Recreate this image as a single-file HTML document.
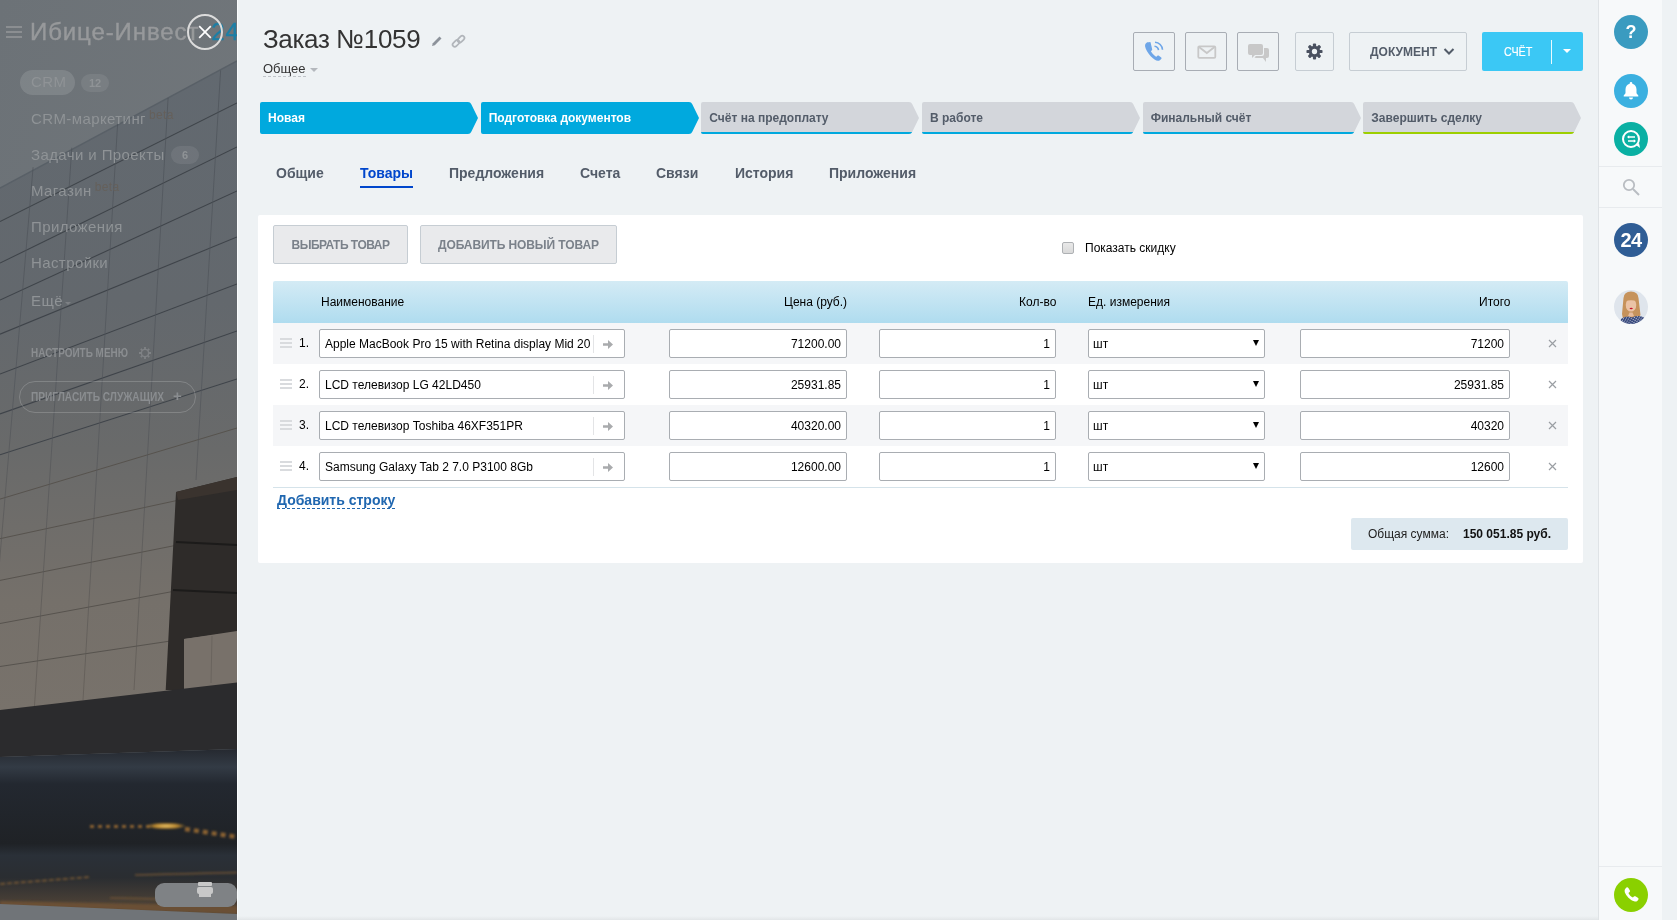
<!DOCTYPE html>
<html><head><meta charset="utf-8">
<style>
*{box-sizing:border-box;margin:0;padding:0}
html,body{-webkit-font-smoothing:antialiased;width:1677px;height:920px;overflow:hidden;background:#eef2f4;font-family:"Liberation Sans",sans-serif;position:relative}
.a{position:absolute}
.lm{position:absolute;left:31px;font-size:15px;letter-spacing:0.4px;color:#8f9396;white-space:nowrap}
.stage{position:absolute;top:102px;height:32px;width:221px}
.stage svg{position:absolute;left:0;top:0}
.stage span{position:absolute;left:8px;top:9px;font-weight:bold;font-size:12px;white-space:nowrap;line-height:14px}
.tab{position:absolute;top:165px;font-weight:bold;font-size:14px;color:#535c69;white-space:nowrap;line-height:16px}
.ib{position:absolute;top:32px;height:39px;border:1px solid #a8adb4;border-radius:2px}
.inp{position:absolute;height:29px;background:#fff;border:1px solid #a9adb2;border-radius:2px;font-size:12px;color:#000;line-height:29px;white-space:nowrap;overflow:hidden}
.th{position:absolute;top:295px;font-size:12px;color:#000;white-space:nowrap;line-height:14px}
</style></head><body><div style="position:absolute;left:0;top:0;width:1677px;height:920px;will-change:transform">

<!-- LEFT BACKGROUND -->
<svg class="a" style="left:0;top:0" width="237" height="920" viewBox="0 0 237 920">
  <defs>
    <linearGradient id="fac" gradientUnits="userSpaceOnUse" x1="0" y1="60" x2="0" y2="712">
      <stop offset="0" stop-color="#626970"/>
      <stop offset="0.37" stop-color="#63686d"/>
      <stop offset="0.6" stop-color="#696a6a"/>
      <stop offset="0.83" stop-color="#75706a"/>
      <stop offset="1" stop-color="#78726b"/>
    </linearGradient>
    <linearGradient id="vl" gradientUnits="userSpaceOnUse" x1="0" y1="60" x2="0" y2="712"><stop offset="0" stop-color="#4a5057"/><stop offset="0.5" stop-color="#50545a"/><stop offset="1" stop-color="#5e5852"/></linearGradient>
    <linearGradient id="sky" x1="0" y1="0" x2="1" y2="1">
      <stop offset="0" stop-color="#6c7277"/>
      <stop offset="1" stop-color="#73787c"/>
    </linearGradient>
    <linearGradient id="road" gradientUnits="userSpaceOnUse" x1="0" y1="750" x2="0" y2="920">
      <stop offset="0" stop-color="#262a31"/>
      <stop offset="0.1" stop-color="#333b45"/>
      <stop offset="0.2" stop-color="#232830"/>
      <stop offset="0.55" stop-color="#1f2226"/>
      <stop offset="0.62" stop-color="#2a3038"/>
      <stop offset="0.75" stop-color="#2a2d31"/>
      <stop offset="0.9" stop-color="#4a4036"/>
      <stop offset="1" stop-color="#5a4a3a"/>
    </linearGradient>
    <radialGradient id="glow" cx="0.5" cy="0.5" r="0.5">
      <stop offset="0" stop-color="#e9c46a"/>
      <stop offset="0.6" stop-color="#b8862f"/>
      <stop offset="1" stop-color="#b8862f" stop-opacity="0"/>
    </radialGradient>
  </defs>
  <rect x="0" y="0" width="237" height="920" fill="url(#sky)"/>
  <polygon points="0,188 237,61 237,700 0,712" fill="url(#fac)"/>
  <g stroke="#3f444a" stroke-width="1.1" fill="none">
    <line x1="0" y1="188" x2="237" y2="61" stroke="#596067" stroke-width="1.5"/>
    <line x1="0" y1="221.5" x2="237" y2="103"/>
    <line x1="0" y1="263.1" x2="237" y2="147"/>
    <line x1="0" y1="300.0" x2="237" y2="191"/>
    <line x1="0" y1="334.2" x2="237" y2="237"/>
    <line x1="0" y1="374.1" x2="237" y2="284"/>
    <line x1="0" y1="413.9" x2="237" y2="331"/>
    <line x1="0" y1="454.8" x2="237" y2="379"/>
  </g>
  <g stroke="#57534e" stroke-width="1" fill="none">
    <line x1="0" y1="499.1" x2="237" y2="428"/>
    <line x1="0" y1="538.7" x2="176" y2="500.7"/>
    <line x1="0" y1="580.4" x2="176" y2="545.3"/>
    <line x1="0" y1="623.5" x2="176" y2="590.9"/>
    <line x1="0" y1="666.5" x2="170" y2="641.1"/>
  </g>
  <g stroke="url(#vl)" stroke-width="0.8" fill="none" opacity="0.8">
    <line x1="33.1" y1="167.2" x2="-12.2" y2="700"/>
    <line x1="71.8" y1="147.7" x2="34.2" y2="710"/>
    <line x1="117.6" y1="124.1" x2="83.0" y2="700"/>
    <line x1="168.1" y1="97.8" x2="134.0" y2="690"/>
    <line x1="220.6" y1="70.4" x2="196" y2="480"/>
    <line x1="210" y1="632" x2="208" y2="684"/>
  </g>
  <polygon points="176,492 237,477 237,632 184,639 184,690 165.7,690" fill="#2e2b29"/>
  <polygon points="176,492 237,477 237,490 178,500" fill="#3a332e"/>
  <polygon points="184,639 237,631 237,683 184,690" fill="#78716a"/>
  <line x1="176" y1="542" x2="237" y2="545" stroke="#1c1b1a" stroke-width="2"/>
  <line x1="173" y1="590" x2="237" y2="593" stroke="#1c1b1a" stroke-width="2"/>
  <line x1="212" y1="636" x2="211" y2="683" stroke="#6a645e" stroke-width="1"/>
  <polygon points="0,710 237,682.6 237,749 0,757" fill="#2b2b2d"/>
  <polygon points="0,757 237,749 237,920 0,920" fill="url(#road)"/>
  <filter id="bl" x="-20%" y="-200%" width="140%" height="500%"><feGaussianBlur stdDeviation="0.9"/></filter>
  <g filter="url(#bl)">
    <line x1="90" y1="826.5" x2="150" y2="826.5" stroke="#8a6232" stroke-width="3" stroke-dasharray="4 4"/>
    <ellipse cx="166" cy="826" rx="20" ry="3.5" fill="url(#glow)"/>
    <line x1="185" y1="829" x2="237" y2="837" stroke="#8a6232" stroke-width="4.5" stroke-dasharray="5 4"/>
    <line x1="0" y1="884" x2="90" y2="877" stroke="#7a5a34" stroke-width="1.6" stroke-dasharray="5 2"/>
    <line x1="135" y1="875" x2="237" y2="872.5" stroke="#6e5234" stroke-width="1.6"/>
    <line x1="110" y1="898" x2="160" y2="899" stroke="#6e5234" stroke-width="1.5"/>
    <polygon points="0,901 237,906 237,914 0,906" fill="#6a5034"/>
  </g>
  <rect x="155" y="883" width="82" height="24" rx="9" fill="#7f8285"/>
  <polygon points="0,904 237,914 237,920 0,920" fill="#707478"/>
</svg>
<!-- LEFT MENU -->
<div class="a" style="left:6px;top:26px;width:16px;height:2px;background:#8b8e91;box-shadow:0 5px 0 #8b8e91,0 10px 0 #8b8e91"></div>
<div class="a" style="left:30px;top:16px;font-size:24px;letter-spacing:0.9px;color:#97999b;white-space:nowrap;line-height:32px;-webkit-text-stroke:0.4px #97999b">Ибице-Инвест<span style="color:#1d7fa6;-webkit-text-stroke:0.4px #1d7fa6;margin-left:12px">24</span></div>
<div class="a" style="left:20px;top:70px;width:55px;height:25px;border-radius:13px;background:rgba(255,255,255,0.12)"></div>
<div class="lm" style="top:73px;left:31px">CRM</div>
<div class="a" style="left:81px;top:74px;width:28px;height:18px;border-radius:9px;background:rgba(255,255,255,0.08);font-size:11px;font-weight:bold;color:#8f9396;text-align:center;line-height:18px">12</div>
<div class="lm" style="top:110px">CRM-маркетинг<span style="font-size:12px;color:#65605b;position:relative;top:-5px;margin-left:3px">beta</span></div>
<div class="lm" style="top:146px">Задачи и Проекты</div>
<div class="a" style="left:171px;top:146px;width:28px;height:18px;border-radius:9px;background:rgba(255,255,255,0.08);font-size:11px;font-weight:bold;color:#8f9396;text-align:center;line-height:18px">6</div>
<div class="lm" style="top:182px">Магазин<span style="font-size:12px;color:#65605b;position:relative;top:-5px;margin-left:3px">beta</span></div>
<div class="lm" style="top:218px">Приложения</div>
<div class="lm" style="top:254px">Настройки</div>
<div class="lm" style="top:292px">Ещё</div><div class="a" style="left:65px;top:302px;width:0;height:0;border-left:3px solid transparent;border-right:3px solid transparent;border-top:3px solid #7d8084"></div>
<div class="a" style="left:31px;top:346px;font-size:12px;font-weight:bold;color:#8a8d90;white-space:nowrap;line-height:14px;transform:scaleX(0.83);transform-origin:0 0">НАСТРОИТЬ МЕНЮ</div>
<svg class="a" style="left:138px;top:346px" width="14" height="14" viewBox="0 0 14 14"><g fill="none" stroke="#7f8285" stroke-width="1.4"><circle cx="7" cy="7" r="3.6"/></g><g stroke="#7f8285" stroke-width="1.8"><path d="M7 1v2.2M7 10.8V13M1 7h2.2M10.8 7H13M2.8 2.8l1.5 1.5M9.7 9.7l1.5 1.5M2.8 11.2l1.5-1.5M9.7 4.3l1.5-1.5"/></g></svg>
<div class="a" style="left:19px;top:381px;width:177px;height:32px;border:1px solid rgba(255,255,255,0.18);border-radius:16px"></div>
<div class="a" style="left:31px;top:390px;font-size:12px;font-weight:bold;color:#8a8d90;white-space:nowrap;line-height:14px;transform:scaleX(0.843);transform-origin:0 0">ПРИГЛАСИТЬ СЛУЖАЩИХ</div>
<div class="a" style="left:173px;top:387px;font-size:15px;font-weight:bold;color:#8a8d90">+</div>
<!-- printer -->
<div class="a" style="left:198px;top:882px;width:14px;height:4px;background:#c8c8c8;border-radius:1px"></div>
<div class="a" style="left:197px;top:887px;width:16px;height:7px;background:#c8c8c8;border-radius:2px"></div>
<div class="a" style="left:199px;top:894px;width:12px;height:3px;background:#c8c8c8"></div>

<!-- close button -->
<div class="a" style="left:187px;top:14px;width:36px;height:36px;border:2px solid #dcdcdc;border-radius:50%"></div>
<svg class="a" style="left:197px;top:24px" width="17" height="17" viewBox="0 0 17 17"><path d="M2.2 2.2L13.8 13.8M13.8 2.2L2.2 13.8" stroke="#fff" stroke-width="1.7"/></svg>

<!-- SLIDER -->
<div class="a" style="left:237px;top:0;width:1361px;height:920px;background:#eef2f4;border-left:1px solid #fafcfd"></div>

<!-- title -->
<div class="a" style="left:263px;top:25px;font-size:26px;letter-spacing:-0.35px;color:#333;white-space:nowrap;line-height:28px">Заказ №1059</div>
<svg class="a" style="left:431px;top:35px" width="12" height="12" viewBox="0 0 12 12"><path d="M1 11L1.8 8.2L8.5 1.5L10.5 3.5L3.8 10.2Z" fill="#8c929a"/></svg>
<svg class="a" style="left:449px;top:33px" width="19" height="17" viewBox="0 0 19 17"><g fill="none" stroke="#b1b5ba" stroke-width="1.7"><rect x="-3.9" y="-2.2" width="7.8" height="4.4" rx="2.2" transform="translate(12 6.2) rotate(-45)"/><rect x="-3.9" y="-2.2" width="7.8" height="4.4" rx="2.2" transform="translate(7 10.4) rotate(-45)"/></g></svg>
<div class="a" style="left:263px;top:61px;font-size:13px;color:#333;white-space:nowrap;line-height:15px;border-bottom:1px dashed #c0c4c9">Общее</div>
<div class="a" style="left:310px;top:68px;width:0;height:0;border-left:4px solid transparent;border-right:4px solid transparent;border-top:4px solid #b4b8bd"></div>

<!-- header buttons -->
<div class="ib" style="left:1133px;width:42px"></div>
<div class="ib" style="left:1185px;width:42px"></div>
<div class="ib" style="left:1237px;width:42px"></div>
<div class="ib" style="left:1295px;width:39px;border-color:#c6cdd3"></div>
<div class="ib" style="left:1349px;width:118px;border-color:#c6cdd3"></div>
<div class="a" style="left:1370px;top:45px;font-size:12px;font-weight:bold;color:#535c69;white-space:nowrap;line-height:14px">ДОКУМЕНТ</div>
<svg class="a" style="left:1443px;top:47px" width="12" height="9" viewBox="0 0 12 9"><path d="M1.5 2L6 6.5L10.5 2" fill="none" stroke="#535c69" stroke-width="2"/></svg>
<div class="a" style="left:1482px;top:32px;width:101px;height:39px;background:#3bc8f5;border-radius:2px"></div>
<div class="a" style="left:1504px;top:45px;font-size:12.5px;color:#fff;white-space:nowrap;line-height:14px;-webkit-text-stroke:0.2px #fff;transform:scaleX(0.86);transform-origin:0 0">СЧЁТ</div>
<div class="a" style="left:1551px;top:40px;width:1px;height:24px;background:#fff;opacity:.9"></div>
<div class="a" style="left:1563px;top:49px;width:0;height:0;border-left:4px solid transparent;border-right:4px solid transparent;border-top:4px solid #fff"></div>

<!-- icons in header buttons -->
<svg class="a" style="left:1144px;top:41px" width="20" height="21" viewBox="0 0 20 21"><path d="M3.2 1.3C2 2 .7 3.4 1.1 5.6c.5 2.8 2.8 6.6 5.6 9.6 2.6 2.7 5.4 4.7 7.3 4.6 1.3-.1 2.5-1 3.4-2.1.3-.4.2-.9-.2-1.2l-2.6-1.9c-.4-.3-.9-.2-1.2.1l-1 1.1c-1.5-.6-4.6-3.7-5.5-5.6l1-1c.4-.3.4-.8.2-1.2L6.6 1.6c-.3-.5-.9-.6-1.3-.4z" fill="#6ea6e8"/><path d="M10.5 5.2a4.5 4.5 0 0 1 4 4M11 1.2a8 8 0 0 1 7.5 7.5" fill="none" stroke="#6ea6e8" stroke-width="1.6"/></svg>
<svg class="a" style="left:1196.5px;top:44.5px" width="20" height="15" viewBox="0 0 20 15"><rect x="1.3" y="1.3" width="17" height="11.5" rx="1" fill="none" stroke="#c8c8c8" stroke-width="1.8"/><path d="M2 2L9.8 8L17.5 2" fill="none" stroke="#c8c8c8" stroke-width="1.8"/></svg>
<svg class="a" style="left:1248px;top:44px" width="22" height="20" viewBox="0 0 22 20"><path d="M2 0h11a2 2 0 0 1 2 2v7a2 2 0 0 1-2 2H7l-3 3v-3H2a2 2 0 0 1-2-2V2a2 2 0 0 1 2-2z" fill="#c8c8c8"/><path d="M16 4h3a2 2 0 0 1 2 2v6a2 2 0 0 1-2 2h-1v4l-3-4H8a2 2 0 0 1-1.5-.7L8 12h6a2 2 0 0 0 2-2z" fill="#c8c8c8"/></svg>
<svg class="a" style="left:1305.5px;top:42.5px" width="17" height="17" viewBox="0 0 18 18"><g fill="#4a5160"><circle cx="9" cy="9" r="6"/><rect x="7.3" y="0.5" width="3.4" height="17" rx="1"/><rect x="7.3" y="0.5" width="3.4" height="17" rx="1" transform="rotate(45 9 9)"/><rect x="7.3" y="0.5" width="3.4" height="17" rx="1" transform="rotate(90 9 9)"/><rect x="7.3" y="0.5" width="3.4" height="17" rx="1" transform="rotate(135 9 9)"/></g><circle cx="9" cy="9" r="2.8" fill="#eef2f4"/></svg>

<!-- STAGES -->
<svg width="0" height="0" style="position:absolute"><defs><clipPath id="stg"><path d="M2 0H208Q210.3 0 211.3 2.3L218 16L211.3 29.7Q210.3 32 208 32H2Q0 32 0 30V2Q0 0 2 0Z"/></clipPath></defs></svg>
<div class="stage" style="left:260px"><svg width="221" height="32"><path d="M2 0H208Q210.3 0 211.3 2.3L218 16L211.3 29.7Q210.3 32 208 32H2Q0 32 0 30V2Q0 0 2 0Z" fill="#00a9de"/></svg><span style="color:#fff">Новая</span></div>
<div class="stage" style="left:480.67px"><svg width="221" height="32"><path d="M2 0H208Q210.3 0 211.3 2.3L218 16L211.3 29.7Q210.3 32 208 32H2Q0 32 0 30V2Q0 0 2 0Z" fill="#00a9de"/></svg><span style="color:#fff">Подготовка документов</span></div>
<div class="stage" style="left:701.33px"><svg width="221" height="32"><path d="M2 0H208Q210.3 0 211.3 2.3L218 16L211.3 29.7Q210.3 32 208 32H2Q0 32 0 30V2Q0 0 2 0Z" fill="#d3d6db"/><rect x="0" y="30" width="220" height="2" fill="#00a9de" clip-path="url(#stg)"/></svg><span style="color:#535c69">Счёт на предоплату</span></div>
<div class="stage" style="left:922px"><svg width="221" height="32"><path d="M2 0H208Q210.3 0 211.3 2.3L218 16L211.3 29.7Q210.3 32 208 32H2Q0 32 0 30V2Q0 0 2 0Z" fill="#d3d6db"/><rect x="0" y="30" width="220" height="2" fill="#00a9de" clip-path="url(#stg)"/></svg><span style="color:#535c69">В работе</span></div>
<div class="stage" style="left:1142.67px"><svg width="221" height="32"><path d="M2 0H208Q210.3 0 211.3 2.3L218 16L211.3 29.7Q210.3 32 208 32H2Q0 32 0 30V2Q0 0 2 0Z" fill="#d3d6db"/><rect x="0" y="30" width="220" height="2" fill="#00a9de" clip-path="url(#stg)"/></svg><span style="color:#535c69">Финальный счёт</span></div>
<div class="stage" style="left:1363.33px"><svg width="221" height="32"><path d="M2 0H208Q210.3 0 211.3 2.3L218 16L211.3 29.7Q210.3 32 208 32H2Q0 32 0 30V2Q0 0 2 0Z" fill="#d3d6db"/><rect x="0" y="30" width="220" height="2" fill="#9dcf00" clip-path="url(#stg)"/></svg><span style="color:#535c69">Завершить сделку</span></div>

<!-- TABS -->
<div class="tab" style="left:276px">Общие</div>
<div class="tab" style="left:360px;color:#0046cc">Товары</div>
<div class="a" style="left:360px;top:186px;width:53px;height:2px;background:#0046cc"></div>
<div class="tab" style="left:449px">Предложения</div>
<div class="tab" style="left:580px">Счета</div>
<div class="tab" style="left:656px">Связи</div>
<div class="tab" style="left:735px">История</div>
<div class="tab" style="left:829px">Приложения</div>

<!-- CARD -->
<div class="a" style="left:258px;top:215px;width:1325px;height:348px;background:#fff;border-radius:2px"></div>
<div class="a" style="left:273px;top:225px;width:135px;height:39px;background:#e9eaec;border:1px solid #c6cdd3;border-radius:2px;font-size:12px;font-weight:bold;color:#7a818a;text-align:center;line-height:39px;letter-spacing:-0.5px">ВЫБРАТЬ ТОВАР</div>
<div class="a" style="left:420px;top:225px;width:197px;height:39px;background:#e9eaec;border:1px solid #c6cdd3;border-radius:2px;font-size:12px;font-weight:bold;color:#7a818a;text-align:center;line-height:39px;letter-spacing:-0.1px">ДОБАВИТЬ НОВЫЙ ТОВАР</div>
<div class="a" style="left:1062px;top:242px;width:12px;height:12px;border:1px solid #aeb1b4;border-radius:2px;background:linear-gradient(#e9e9e9,#d9d9d9)"></div>
<div class="a" style="left:1085px;top:241px;font-size:12px;color:#000;white-space:nowrap;line-height:14px">Показать скидку</div>

<!-- table header -->
<div class="a" style="left:273px;top:281px;width:1295px;height:42px;background:linear-gradient(#d4ebf5,#afdcef);border-radius:2px 2px 0 0"></div>
<div class="th" style="left:321px">Наименование</div>
<div class="th" style="left:784px">Цена (руб.)</div>
<div class="th" style="left:1019px">Кол-во</div>
<div class="th" style="left:1088px">Ед. измерения</div>
<div class="th" style="left:1479px">Итого</div>

<div class="a" style="left:273px;top:323px;width:1295px;height:41px;background:#f5f6f8"></div>
<div class="a" style="left:280px;top:338px;width:12px;height:2px;background:#d9dbde;box-shadow:0 4px 0 #d9dbde,0 8px 0 #d9dbde"></div>
<div class="a" style="left:299px;top:336px;font-size:12px;color:#000;line-height:14px">1.</div>
<div class="inp" style="left:319px;top:329px;width:306px;padding-left:5px"><span style="display:inline-block;width:268px;overflow:hidden">Apple MacBook Pro 15 with Retina display Mid 20</span></div>
<div class="a" style="left:593px;top:335px;width:1px;height:18px;background:#e3e4e6"></div>
<svg class="a" style="left:603px;top:340px" width="10" height="9" viewBox="0 0 10 9"><path d="M0 3.2H5V0L10 4.5L5 9V5.8H0Z" fill="#a9abad"/></svg>
<div class="inp" style="left:669px;top:329px;width:178px;text-align:right;padding-right:5px">71200.00</div>
<div class="inp" style="left:879px;top:329px;width:177px;text-align:right;padding-right:5px">1</div>
<div class="inp" style="left:1088px;top:329px;width:177px;padding-left:4px">шт</div>
<div class="a" style="left:1252.5px;top:340px;width:0;height:0;border-left:3px solid transparent;border-right:3px solid transparent;border-top:6px solid #000"></div>
<div class="inp" style="left:1300px;top:329px;width:210px;text-align:right;padding-right:5px">71200</div>
<svg class="a" style="left:1548px;top:339px" width="9" height="9" viewBox="0 0 9 9"><path d="M1 1L8 8M8 1L1 8" stroke="#9a9ea3" stroke-width="1.2"/></svg>
<div class="a" style="left:273px;top:364px;width:1295px;height:41px;background:#fff"></div>
<div class="a" style="left:280px;top:379px;width:12px;height:2px;background:#d9dbde;box-shadow:0 4px 0 #d9dbde,0 8px 0 #d9dbde"></div>
<div class="a" style="left:299px;top:377px;font-size:12px;color:#000;line-height:14px">2.</div>
<div class="inp" style="left:319px;top:370px;width:306px;padding-left:5px"><span style="display:inline-block;width:268px;overflow:hidden">LCD телевизор LG 42LD450</span></div>
<div class="a" style="left:593px;top:376px;width:1px;height:18px;background:#e3e4e6"></div>
<svg class="a" style="left:603px;top:381px" width="10" height="9" viewBox="0 0 10 9"><path d="M0 3.2H5V0L10 4.5L5 9V5.8H0Z" fill="#a9abad"/></svg>
<div class="inp" style="left:669px;top:370px;width:178px;text-align:right;padding-right:5px">25931.85</div>
<div class="inp" style="left:879px;top:370px;width:177px;text-align:right;padding-right:5px">1</div>
<div class="inp" style="left:1088px;top:370px;width:177px;padding-left:4px">шт</div>
<div class="a" style="left:1252.5px;top:381px;width:0;height:0;border-left:3px solid transparent;border-right:3px solid transparent;border-top:6px solid #000"></div>
<div class="inp" style="left:1300px;top:370px;width:210px;text-align:right;padding-right:5px">25931.85</div>
<svg class="a" style="left:1548px;top:380px" width="9" height="9" viewBox="0 0 9 9"><path d="M1 1L8 8M8 1L1 8" stroke="#9a9ea3" stroke-width="1.2"/></svg>
<div class="a" style="left:273px;top:405px;width:1295px;height:41px;background:#f5f6f8"></div>
<div class="a" style="left:280px;top:420px;width:12px;height:2px;background:#d9dbde;box-shadow:0 4px 0 #d9dbde,0 8px 0 #d9dbde"></div>
<div class="a" style="left:299px;top:418px;font-size:12px;color:#000;line-height:14px">3.</div>
<div class="inp" style="left:319px;top:411px;width:306px;padding-left:5px"><span style="display:inline-block;width:268px;overflow:hidden">LCD телевизор Toshiba 46XF351PR</span></div>
<div class="a" style="left:593px;top:417px;width:1px;height:18px;background:#e3e4e6"></div>
<svg class="a" style="left:603px;top:422px" width="10" height="9" viewBox="0 0 10 9"><path d="M0 3.2H5V0L10 4.5L5 9V5.8H0Z" fill="#a9abad"/></svg>
<div class="inp" style="left:669px;top:411px;width:178px;text-align:right;padding-right:5px">40320.00</div>
<div class="inp" style="left:879px;top:411px;width:177px;text-align:right;padding-right:5px">1</div>
<div class="inp" style="left:1088px;top:411px;width:177px;padding-left:4px">шт</div>
<div class="a" style="left:1252.5px;top:422px;width:0;height:0;border-left:3px solid transparent;border-right:3px solid transparent;border-top:6px solid #000"></div>
<div class="inp" style="left:1300px;top:411px;width:210px;text-align:right;padding-right:5px">40320</div>
<svg class="a" style="left:1548px;top:421px" width="9" height="9" viewBox="0 0 9 9"><path d="M1 1L8 8M8 1L1 8" stroke="#9a9ea3" stroke-width="1.2"/></svg>
<div class="a" style="left:273px;top:446px;width:1295px;height:41px;background:#fff"></div>
<div class="a" style="left:280px;top:461px;width:12px;height:2px;background:#d9dbde;box-shadow:0 4px 0 #d9dbde,0 8px 0 #d9dbde"></div>
<div class="a" style="left:299px;top:459px;font-size:12px;color:#000;line-height:14px">4.</div>
<div class="inp" style="left:319px;top:452px;width:306px;padding-left:5px"><span style="display:inline-block;width:268px;overflow:hidden">Samsung Galaxy Tab 2 7.0 P3100 8Gb</span></div>
<div class="a" style="left:593px;top:458px;width:1px;height:18px;background:#e3e4e6"></div>
<svg class="a" style="left:603px;top:463px" width="10" height="9" viewBox="0 0 10 9"><path d="M0 3.2H5V0L10 4.5L5 9V5.8H0Z" fill="#a9abad"/></svg>
<div class="inp" style="left:669px;top:452px;width:178px;text-align:right;padding-right:5px">12600.00</div>
<div class="inp" style="left:879px;top:452px;width:177px;text-align:right;padding-right:5px">1</div>
<div class="inp" style="left:1088px;top:452px;width:177px;padding-left:4px">шт</div>
<div class="a" style="left:1252.5px;top:463px;width:0;height:0;border-left:3px solid transparent;border-right:3px solid transparent;border-top:6px solid #000"></div>
<div class="inp" style="left:1300px;top:452px;width:210px;text-align:right;padding-right:5px">12600</div>
<svg class="a" style="left:1548px;top:462px" width="9" height="9" viewBox="0 0 9 9"><path d="M1 1L8 8M8 1L1 8" stroke="#9a9ea3" stroke-width="1.2"/></svg>
<div class="a" style="left:273px;top:487px;width:1295px;height:1px;background:#d5e3ea"></div>
<div class="a" style="left:277px;top:492px;font-size:14px;font-weight:bold;color:#2067b0;white-space:nowrap;line-height:16px;border-bottom:1px dashed #2067b0">Добавить строку</div>
<div class="a" style="left:1351px;top:518px;width:217px;height:32px;background:#dde8ef;border-radius:2px"></div>
<div class="a" style="left:1368px;top:527px;font-size:12px;color:#222;white-space:nowrap;line-height:14px">Общая сумма:</div>
<div class="a" style="left:1463px;top:527px;font-size:12px;font-weight:bold;color:#111;white-space:nowrap;line-height:14px">150 051.85 руб.</div>
<div class="a" style="left:1598px;top:0;width:1px;height:920px;background:#dfe3e6"></div>
<div class="a" style="left:1599px;top:0;width:63px;height:920px;background:#f7f9fa"></div>
<div class="a" style="left:1614px;top:15px;width:34px;height:34px;border-radius:50%;background:#3a9bc0;color:#fff;font-weight:bold;font-size:18px;text-align:center;line-height:34px">?</div>
<div class="a" style="left:1614px;top:74px;width:34px;height:34px;border-radius:50%;background:#3bb0e0"></div>
<svg class="a" style="left:1622px;top:81px" width="18" height="20" viewBox="0 0 18 20"><path d="M9 1a1.3 1.3 0 0 1 1.3 1.3v.5c2.6.6 4.2 2.8 4.2 5.6v3.8l1.8 2.3v1H1.7v-1l1.8-2.3V8.4c0-2.8 1.6-5 4.2-5.6v-.5A1.3 1.3 0 0 1 9 1z" fill="#fff"/><path d="M7 16.5h4a2 2 0 0 1-4 0z" fill="#fff"/></svg>
<div class="a" style="left:1614px;top:122px;width:34px;height:34px;border-radius:50%;background:#0ab0a3"></div>
<svg class="a" style="left:1620px;top:128px" width="23" height="23" viewBox="0 0 23 23"><circle cx="11" cy="11" r="8" fill="none" stroke="#fff" stroke-width="2"/><path d="M16 17l4 3l-1-5z" fill="#fff"/><path d="M8 9h7M8 13h7" stroke="#fff" stroke-width="1.3"/><path d="M7 9l2.2-1.8v3.6zM16 13l-2.2-1.8v3.6z" fill="#fff"/></svg>
<div class="a" style="left:1599px;top:166px;width:63px;height:1px;background:#e8ebee"></div>
<svg class="a" style="left:1622px;top:178px" width="19" height="19" viewBox="0 0 19 19"><circle cx="7" cy="7" r="5.2" fill="none" stroke="#b9bdc2" stroke-width="1.8"/><path d="M11 11L17 17" stroke="#b9bdc2" stroke-width="2"/></svg>
<div class="a" style="left:1599px;top:207px;width:63px;height:1px;background:#e8ebee"></div>
<div class="a" style="left:1614px;top:223px;width:34px;height:34px;border-radius:50%;background:#2f5d95;color:#fff;font-weight:bold;font-size:20px;text-align:center;line-height:34px;letter-spacing:-0.5px">24</div>
<svg class="a" style="left:1614px;top:290px" width="34" height="34" viewBox="0 0 34 34"><defs><clipPath id="av"><circle cx="17" cy="17" r="17"/></clipPath><pattern id="blz" width="2.2" height="2.2" patternUnits="userSpaceOnUse" patternTransform="rotate(30)"><rect width="2.2" height="2.2" fill="#34467a"/><rect width="1" height="1" fill="#e6e8f0"/></pattern></defs><g clip-path="url(#av)"><rect width="34" height="34" fill="#dfe5ec"/><path d="M9.5 8Q10 1.5 17 1.5Q24 1.5 24.5 8L26.5 25L24 29L9 29L8 24Z" fill="#c6935c"/><ellipse cx="17" cy="15" rx="5.3" ry="6.6" fill="#ebc3a6"/><path d="M11 9.5Q17 5.5 23 9.5L23 11.5Q17 9 11 11.5Z" fill="#c6935c"/><path d="M10.5 9L12 22L10 26Z M23.5 9L22 22L24.5 26Z" fill="#c6935c"/><ellipse cx="17.2" cy="18.5" rx="1.6" ry="0.75" fill="#c8102e"/><path d="M5 34L7 29Q13 25 18 27.5Q25 24.5 31 28L32 34Z" fill="url(#blz)"/><path d="M15.5 22.5h3l1.5 3.5q-3 1.5-6 0z" fill="#e6bb9c"/></g></svg>
<div class="a" style="left:1599px;top:866px;width:63px;height:1px;background:#e8ebee"></div>
<div class="a" style="left:1614px;top:878px;width:34px;height:34px;border-radius:50%;background:#8ad000"></div>
<svg class="a" style="left:1622px;top:886px" width="18" height="18" viewBox="0 0 18 18"><path d="M4.5 1.5c.8-.5 1.5 0 1.9.6l1.5 2.4c.3.5.2 1.1-.3 1.5L6.4 7c.8 1.8 2.6 3.7 4.5 4.6l1-1.1c.4-.4 1-.5 1.5-.2l2.4 1.5c.6.4 1 1.2.5 1.9-1 1.6-2.6 2.3-4.2 1.6C8.2 14 4 9.8 2.8 6.2c-.6-1.8.2-3.6 1.7-4.7z" fill="#fff"/></svg>
<div class="a" style="left:237px;top:916px;width:1361px;height:4px;background:linear-gradient(rgba(0,0,0,0),rgba(0,0,0,0.05))"></div>

</div></body></html>
